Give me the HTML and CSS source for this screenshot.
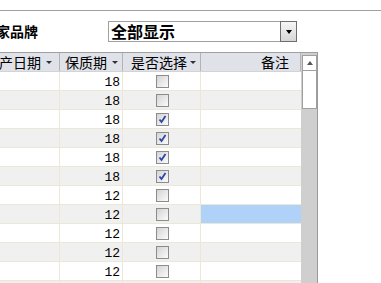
FILE: index.html
```html
<!DOCTYPE html>
<html lang="zh-CN">
<head>
  <meta charset="UTF-8" />
  <title>产品列表</title>
  <link rel="stylesheet" href="styles.css">
</head>
<body>
  <div class="rule"></div>

  <div class="filter">
    <span class="filter-label">家品牌</span>
    <div class="combo">
      <span class="combo-text">全部显示</span>
      <span class="combo-btn"><i class="tri"></i></span>
    </div>
  </div>

  <div class="grid-wrap">
    <div class="grid">
      <div class="row head">
        <div class="cell c1"><span>产日期</span><i class="sort"></i></div>
        <div class="cell c2"><span>保质期</span><i class="sort"></i></div>
        <div class="cell c3"><span>是否选择</span><i class="sort"></i></div>
        <div class="cell c4"><span>备注</span></div>
      </div>
      <div id="rows"></div>
      <div class="row alt filler">
        <div class="cell c1"></div>
        <div class="cell c2"></div>
        <div class="cell c3"></div>
        <div class="cell c4"></div>
      </div>
    </div>
    <div class="vscroll">
      <div class="thumb">
        <div class="up"><i class="tri-up"></i></div>
      </div>
    </div>
  </div>

  <script>
    // 保质期, 是否选择, 备注选中
    var data = [
      [18, false], [18, false], [18, true], [18, true], [18, true], [18, true],
      [12, false], [12, false, true], [12, false], [12, false], [12, false]
    ];
    var check = '<svg width="11" height="11" viewBox="0 0 11 11"><path d="M2.5 5.5 L4.5 8 L8.5 2" fill="none" stroke="#2d46a8" stroke-width="1.8"/></svg>';
    var html = '';
    data.forEach(function (d, i) {
      html += '<div class="row' + (i % 2 ? ' alt' : '') + '">' +
        '<div class="cell c1"></div>' +
        '<div class="cell c2 num">' + d[0] + '</div>' +
        '<div class="cell c3"><span class="cb">' + (d[1] ? check : '') + '</span></div>' +
        '<div class="cell c4' + (d[2] ? ' sel' : '') + '"></div>' +
        '</div>';
    });
    document.getElementById('rows').innerHTML = html;
  </script>
</body>
</html>
```

FILE: styles.css
```css
body {
  margin: 0; height: 283px; overflow: hidden; background: #fff; color: #000;
  font-family: "Noto Sans CJK SC", "Liberation Sans", sans-serif;
}
.rule { border-top: 1px solid #a0a0a0; margin-top: 10px; }

.filter { display: flex; margin-top: 10px; height: 21px; }
.filter-label {
  width: 112px; margin-left: -4px; font-size: 14px; font-weight: bold; line-height: 21px;
}
.combo {
  width: 189px; height: 21px; box-sizing: border-box; display: flex;
  border: 1px solid #a0a0a0;
}
.combo-text { flex: 1; padding-left: 2px; font-size: 16px; font-weight: bold; line-height: 19px; }
.combo-btn {
  width: 17px; margin: -1px -1px -1px 0; box-sizing: border-box;
  border: 1px solid #6e6e6e; background: linear-gradient(#f6f6f6, #d6d6d6);
  display: flex; align-items: center; justify-content: center;
}
.tri {
  width: 0; height: 0; border-left: 3.5px solid transparent;
  border-right: 3.5px solid transparent; border-top: 4px solid #000;
}

.grid-wrap {
  margin-top: 10px; width: 318px; box-sizing: border-box; display: flex;
  border-top: 1px solid #a0a0a0; border-right: 1px solid #9a9a9a;
}
.grid { width: 301px; }
.row {
  display: grid; grid-template-columns: 60px 63px 78px 100px;
  height: 19px; box-sizing: border-box; border-bottom: 1px solid #ebe8d6;
}
.row.alt { background: #f0f0f0; }
.cell {
  border-right: 1px solid #ebe8d6; display: flex; align-items: center; overflow: hidden;
}
.cell.c4 { border-right: none; }
.cell.sel { background: #b0d2f8; }

.head { background: #dfe2e8; border-bottom-color: #d3d3d3; }
.head .cell { border-right-color: #b4b4b4; font-size: 14px; line-height: 18px; white-space: nowrap; }
.head .c1 { margin-left: -1px; }
.head .c2 { padding-left: 5px; }
.head .c3 { padding-left: 4px; }
.head .c4 { justify-content: flex-end; padding-right: 11px; border-right: 1px solid #b4b4b4; }
.sort {
  width: 0; height: 0; margin-left: 5px; border-left: 3px solid transparent;
  border-right: 3px solid transparent; border-top: 3px solid #333;
}
.head .c3 .sort { margin-left: 3px; }

.num {
  justify-content: flex-end; padding-right: 2px; padding-top: 2px; box-sizing: border-box;
  font-family: "Liberation Mono", monospace; font-size: 13px;
}
.c3 { justify-content: center; }
.cb {
  width: 13px; height: 13px; box-sizing: border-box; margin-left: 2px;
  border: 1px solid #8c8c8c; background: linear-gradient(135deg, #d4d4d4, #fbfbfb);
  display: flex; align-items: center; justify-content: center;
}

.vscroll { width: 16px; background: #cfcfcf; padding: 2px 0 0 1px; box-sizing: border-box; }
.thumb {
  width: 15px; height: 54px; box-sizing: border-box;
  border: 1px solid #a0a0a0; background: #fff;
}
.up {
  height: 14px; border-bottom: 1px solid #a0a0a0;
  display: flex; align-items: center; justify-content: center;
}
.tri-up {
  width: 0; height: 0; border-left: 3.5px solid transparent;
  border-right: 3.5px solid transparent; border-bottom: 4px solid #555;
}
```
